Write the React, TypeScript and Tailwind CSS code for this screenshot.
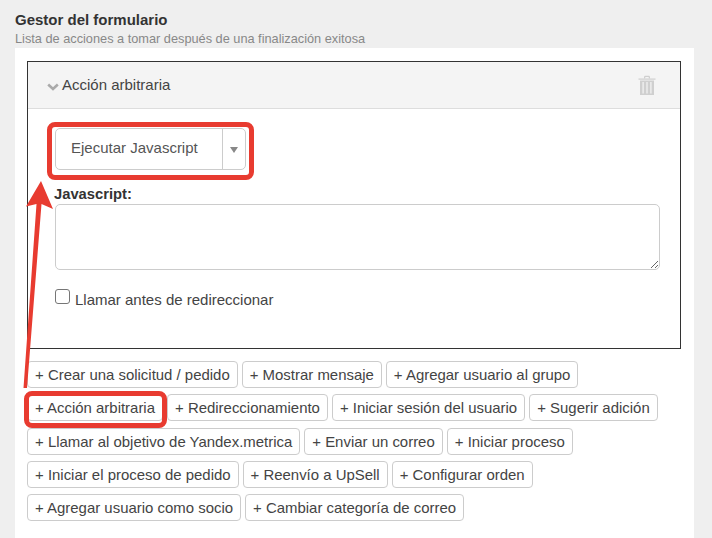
const actions = [
  "Crear una solicitud / pedido",
  "Mostrar mensaje",
  "Agregar usuario al grupo",
  "Acción arbitraria",
  "Redireccionamiento",
  "Iniciar sesión del usuario",
  "Sugerir adición",
  "Llamar al objetivo de Yandex.metrica",
  "Enviar un correo",
  "Iniciar proceso",
  "Iniciar el proceso de pedido",
  "Reenvío a UpSell",
  "Configurar orden",
  "Agregar usuario como socio",
  "Cambiar categoría de correo",
];

function Trash() {
  return (
    <svg width="18" height="20" viewBox="0 0 18 20" fill="#cfcfcf">
      <path d="M0.5 3.5h17v1.2H.5z" />
      <path d="M6 3.5V2.2C6 1.4 6.6 .8 7.4 .8h3.2c.8 0 1.4.6 1.4 1.4v1.3h-1.2V2.4c0-.3-.2-.5-.5-.5H7.7c-.3 0-.5.2-.5.5v1.1z" />
      <path fillRule="evenodd" d="M2 5.5h14V20H2zM4.5 7v11.5h1.2V7zM8.4 7v11.5h1.2V7zM12.3 7v11.5h1.2V7z" />
    </svg>
  );
}

export default function App() {
  return (
    <div className="relative h-[538px] w-[712px] overflow-hidden bg-[#efefef] px-[15px] pt-[11px] font-['Liberation_Sans',Arial,sans-serif] text-[#333]">
      <h2 className="text-[15px] font-bold leading-[18px] text-[#333]">Gestor del formulario</h2>
      <p className="text-[12.75px] leading-[19px] text-[#888]">Lista de acciones a tomar después de una finalización exitosa</p>

      <div className="h-[490px] w-[679px] bg-white px-[12px] pt-[13px]">
        <div className="h-[288px] w-[654px] border border-[#333] bg-white">
          <div className="flex h-[47px] items-center justify-between border-b border-[#ddd] bg-[#f4f4f4] pl-[19px] pr-[24px]">
            <div className="flex items-center gap-[3px] text-[15px] text-[#444]">
              <svg width="12" height="8" viewBox="0 0 12 8" className="mt-[3px]">
                <path d="M1.2 1.5 6 6l4.8-4.5" fill="none" stroke="#aaa" strokeWidth="2.6" />
              </svg>
              <span>Acción arbitraria</span>
            </div>
            <Trash />
          </div>
          <div className="pl-[27px] pr-[20px] pt-[19px]">
            <div className="flex h-[42px] w-[191px] items-center rounded-[5px] border border-[#ccc] bg-white text-[#555]">
              <span className="flex-1 pb-[2px] pl-[15px] text-[15px]">Ejecutar Javascript</span>
              <span className="flex h-full w-[23px] items-center justify-center border-l border-[#ccc]">
                <svg width="8" height="6" viewBox="0 0 8 6" className="mt-[2px]"><path d="M0 0h8L4 6z" fill="#888" /></svg>
              </span>
            </div>
            <label className="mt-[15px] -ml-[1px] block text-[14.75px] font-bold leading-[19px] text-[#333]">Javascript:</label>
            <textarea className="block h-[66px] w-[605px] rounded-[5px] border border-[#ccc] bg-white" />
            <div className="mt-[19px] flex items-start gap-[5px] text-[15px] leading-[21px] text-[#444]">
              <span className="h-[15px] w-[15px] rounded-[3px] border border-[#767676] bg-white" />
              <span>Llamar antes de redireccionar</span>
            </div>
          </div>
        </div>

        <div className="mt-[12px] flex w-[654px] flex-wrap gap-x-[4px] gap-y-[6.25px]">
          {actions.map((a) => (
            <button key={a} className="h-[27px] whitespace-nowrap rounded-[4px] border border-[#ccc] bg-white px-[7px] pt-[1px] text-[14.95px] leading-[24px] text-[#444]">
              + {a}
            </button>
          ))}
        </div>
      </div>

      <div className="absolute left-[47px] top-[122px] h-[58px] w-[207px] rounded-[8px] border-[5px] border-[#e83b30]" />
      <div className="absolute left-[24px] top-[391px] h-[37px] w-[143px] rounded-[8px] border-[5px] border-[#e83b30]" />
      <svg className="absolute left-0 top-0" width="712" height="538" viewBox="0 0 712 538">
        <path d="M41 181 L53 209 L41.5 204 L27 388 L23.5 388 L36.5 204 L26 206.5 Z" fill="#e83b30" />
      </svg>
    </div>
  );
}
